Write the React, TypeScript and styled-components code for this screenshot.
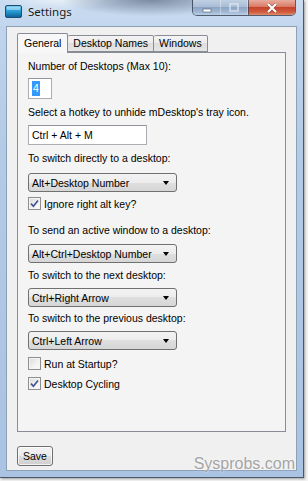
import React from "react";
import styled, { createGlobalStyle } from "styled-components";

const GlobalStyle = createGlobalStyle`
  html, body {
    margin: 0;
    padding: 0;
    background: #f2f2f2;
  }
  body {
    width: 308px;
    height: 481px;
    overflow: hidden;
    font-family: "Liberation Sans", Arial, sans-serif;
  }
`;

const Window = styled.div`
  position: relative;
  box-sizing: border-box;
  width: 304px;
  height: 478px;
  display: flex;
  flex-direction: column;
  padding: 0 6px 6px 6px;
  background: linear-gradient(to bottom, #c2d6ee 0%, #b4cbe6 30%, #aac3e2 100%);
  border-right: 1px solid #4a586b;
  border-bottom: 1px solid #4a586b;
  box-shadow: 1px 1px 2px rgba(0, 0, 0, 0.35);
`;

const TitleBar = styled.div`
  position: relative;
  height: 26px;
  margin: 0 -6px;
  display: flex;
  align-items: flex-start;
  background:
    radial-gradient(ellipse 90px 16px at 50% 0%, rgba(70, 85, 110, 0.6), rgba(70, 85, 110, 0) 100%),
    radial-gradient(ellipse 60px 10px at 20% 0%, rgba(255, 255, 255, 0.55), rgba(255, 255, 255, 0) 100%),
    linear-gradient(to bottom, #cadcf0 0%, #c2d6ee 100%);
`;

const AppIcon = styled.svg`
  margin: 5px 0 0 5px;
  flex: none;
`;

const TitleText = styled.span`
  margin: 4px 0 0 6px;
  font-family: "Noto Sans", "Open Sans", sans-serif;
  font-size: 11.5px;
  line-height: 16px;
  color: #1b1b1b;
  text-shadow: 0 0 6px rgba(255, 255, 255, 0.9);
`;

const CaptionButtons = styled.div`
  margin-left: auto;
  margin-right: 7px;
  display: flex;
  height: 15px;
  border: 1px solid rgba(40, 52, 70, 0.75);
  border-top: none;
  border-radius: 0 0 5px 5px;
  overflow: hidden;
`;

const CaptionButton = styled.div<{ $w: number; $close?: boolean }>`
  width: ${(p) => p.$w}px;
  height: 100%;
  display: flex;
  align-items: center;
  justify-content: center;
  box-sizing: border-box;
  border-left: ${(p) => (p.$close ? "1px solid rgba(40,52,70,0.6)" : "none")};
  border-right: 1px solid rgba(255, 255, 255, 0.35);
  background: ${(p) =>
    p.$close
      ? "linear-gradient(to bottom, #e8ad9f 0%, #d97a64 45%, #c6442c 50%, #cf5a3e 80%, #e28c6c 100%)"
      : "linear-gradient(to bottom, #c0d0e4 0%, #a9bdd6 45%, #8ea6c4 50%, #a0b7d4 80%, #bccfe6 100%)"};
  &:last-child {
    border-right: none;
  }
`;

const Client = styled.div`
  flex: 1;
  display: flex;
  flex-direction: column;
  padding: 6px 10px 0 10px;
  background: #f0f0f0;
  border: 1px solid #8ea0b8;
`;

const TabStrip = styled.div`
  display: flex;
  align-items: flex-end;
  height: 19px;
  position: relative;
  z-index: 1;
`;

const Tab = styled.div<{ $active?: boolean }>`
  box-sizing: border-box;
  height: ${(p) => (p.$active ? 20 : 17)}px;
  margin-bottom: ${(p) => (p.$active ? -1 : 0)}px;
  padding: 0 ${(p) => (p.$active ? 6 : 5)}px;
  border: 1px solid #898c95;
  border-bottom: ${(p) => (p.$active ? "none" : "1px solid #898c95")};
  border-left: ${(p) => (p.$active ? "1px solid #898c95" : "none")};
  border-radius: 2px 2px 0 0;
  background: ${(p) =>
    p.$active
      ? "#f7f7f7"
      : "linear-gradient(to bottom, #f4f4f4 0%, #ebebeb 50%, #dedede 50%, #e6e6e6 100%)"};
  font-size: 10.5px;
  line-height: ${(p) => (p.$active ? 18 : 15)}px;
  color: #000;
  white-space: nowrap;
  &:first-child {
    border-left: 1px solid #898c95;
  }
`;

const Panel = styled.div`
  box-sizing: border-box;
  width: 269px;
  height: 380px;
  border: 1px solid #898c95;
  background: #f4f4f4;
  padding: 7px 10px;
  display: flex;
  flex-direction: column;
  align-items: flex-start;
`;

const Label = styled.div<{ $top: number }>`
  margin-top: ${(p) => p.$top}px;
  font-size: 10.5px;
  line-height: 13px;
  color: #000;
  white-space: nowrap;
`;

const TextBox = styled.div<{ $top: number; $w: number; $h: number }>`
  box-sizing: border-box;
  margin-top: ${(p) => p.$top}px;
  width: ${(p) => p.$w}px;
  height: ${(p) => p.$h}px;
  display: flex;
  align-items: center;
  padding-left: 3px;
  background: #fff;
  border: 1px solid #abadb3;
  border-top-color: #8f939b;
  font-size: 10.5px;
  color: #000;
`;

const Highlight = styled.span`
  background: #3399ff;
  color: #fff;
  line-height: 15px;
  padding: 0 1px;
`;

const Select = styled.div<{ $top: number }>`
  box-sizing: border-box;
  margin-top: ${(p) => p.$top}px;
  width: 149px;
  height: 19px;
  display: flex;
  align-items: center;
  padding: 0 7px 0 3px;
  border: 1px solid #707070;
  border-radius: 3px;
  background: linear-gradient(to bottom, #f3f3f3 0%, #ececec 50%, #dfdfdf 50%, #d6d6d6 100%);
  font-size: 10.5px;
  color: #000;
  white-space: nowrap;
`;

const Arrow = styled.span`
  margin-left: auto;
  width: 0;
  height: 0;
  border-left: 3.5px solid transparent;
  border-right: 3.5px solid transparent;
  border-top: 4px solid #000;
`;

const CheckRow = styled.div<{ $top: number }>`
  margin-top: ${(p) => p.$top}px;
  display: flex;
  align-items: center;
  gap: 3px;
  height: 13px;
  font-size: 10.5px;
  color: #000;
  white-space: nowrap;
`;

const Box = styled.span`
  box-sizing: border-box;
  width: 13px;
  height: 13px;
  border: 1px solid #8e8f8f;
  background: linear-gradient(135deg, #d7d9dc 0%, #f3f3f3 60%, #fbfbfb 100%);
  box-shadow: inset 0 0 0 1px #f4f4f4;
  display: flex;
  align-items: center;
  justify-content: center;
`;

const SaveButton = styled.div`
  box-sizing: border-box;
  margin-top: 14px;
  width: 36px;
  height: 20px;
  border: 1px solid #707070;
  border-radius: 3px;
  background: linear-gradient(to bottom, #f2f2f2 0%, #ebebeb 50%, #dddddd 50%, #cfcfcf 100%);
  box-shadow: inset 0 0 0 1px rgba(255, 255, 255, 0.7);
  font-size: 10.5px;
  line-height: 18px;
  text-align: center;
  color: #000;
`;

const Watermark = styled.div`
  position: absolute;
  right: 8px;
  bottom: 4px;
  font-family: "Liberation Sans", Arial, sans-serif;
  font-size: 16px;
  line-height: 18px;
  color: #a4a4a4;
  text-shadow: 0 0 2px #fff;
`;

const Checkbox: React.FC<{ checked?: boolean; top: number; label: string }> = ({
  checked,
  top,
  label,
}) => (
  <CheckRow $top={top}>
    <Box>
      {checked && (
        <svg width="9" height="9" viewBox="0 0 9 9">
          <path d="M1 4.6 L3.4 7.2 L8 1.4" stroke="#41508f" strokeWidth="1.6" fill="none" />
        </svg>
      )}
    </Box>
    {label}
  </CheckRow>
);

const Combo: React.FC<{ top: number; value: string }> = ({ top, value }) => (
  <Select $top={top}>
    {value}
    <Arrow />
  </Select>
);

export default function App() {
  return (
    <>
      <GlobalStyle />
      <Window>
        <TitleBar>
          <AppIcon width="17" height="13" viewBox="0 0 17 13">
            <defs>
              <linearGradient id="ic" x1="0" y1="0" x2="0" y2="1">
                <stop offset="0" stopColor="#7fd0f0" />
                <stop offset="0.45" stopColor="#2a9fd6" />
                <stop offset="1" stopColor="#0b5f96" />
              </linearGradient>
            </defs>
            <rect x="0.5" y="0.5" width="16" height="12" rx="1.5" fill="url(#ic)" stroke="#1d4f74" />
            <rect x="2" y="2" width="13" height="3" fill="#ffffff" opacity="0.35" />
          </AppIcon>
          <TitleText>Settings</TitleText>
          <CaptionButtons>
            <CaptionButton $w={28}>
              <svg width="10" height="10" viewBox="0 0 10 10">
                <rect x="1" y="6" width="8" height="3" fill="#fff" stroke="#4a5a70" strokeWidth="0.6" />
              </svg>
            </CaptionButton>
            <CaptionButton $w={27}>
              <svg width="10" height="9" viewBox="0 0 10 9">
                <rect x="1" y="1" width="8" height="7" fill="none" stroke="#e8eef6" strokeWidth="1.6" opacity="0.7" />
              </svg>
            </CaptionButton>
            <CaptionButton $w={47} $close>
              <svg width="12" height="10" viewBox="0 0 12 10">
                <path d="M2 1 L10 9 M10 1 L2 9" stroke="#5a2218" strokeWidth="3.2" opacity="0.5" />
                <path d="M2 1 L10 9 M10 1 L2 9" stroke="#fff" strokeWidth="2.2" />
              </svg>
            </CaptionButton>
          </CaptionButtons>
        </TitleBar>
        <Client>
          <TabStrip>
            <Tab $active>General</Tab>
            <Tab>Desktop Names</Tab>
            <Tab>Windows</Tab>
          </TabStrip>
          <Panel>
            <Label $top={0}>Number of Desktops (Max 10):</Label>
            <TextBox $top={5} $w={24} $h={21}>
              <Highlight>4</Highlight>
            </TextBox>
            <Label $top={7}>Select a hotkey to unhide mDesktop's tray icon.</Label>
            <TextBox $top={6} $w={119} $h={20}>
              Ctrl + Alt + M
            </TextBox>
            <Label $top={7}>To switch directly to a desktop:</Label>
            <Combo top={8} value="Alt+Desktop Number" />
            <Checkbox top={5} checked label="Ignore right alt key?" />
            <Label $top={14}>To send an active window to a desktop:</Label>
            <Combo top={7} value="Alt+Ctrl+Desktop Number" />
            <Label $top={6}>To switch to the next desktop:</Label>
            <Combo top={6} value="Ctrl+Right Arrow" />
            <Label $top={5}>To switch to the previous desktop:</Label>
            <Combo top={6} value="Ctrl+Left Arrow" />
            <Checkbox top={7} label="Run at Startup?" />
            <Checkbox top={7} checked label="Desktop Cycling" />
          </Panel>
          <SaveButton>Save</SaveButton>
        </Client>
        <Watermark>Sysprobs.com</Watermark>
      </Window>
    </>
  );
}
